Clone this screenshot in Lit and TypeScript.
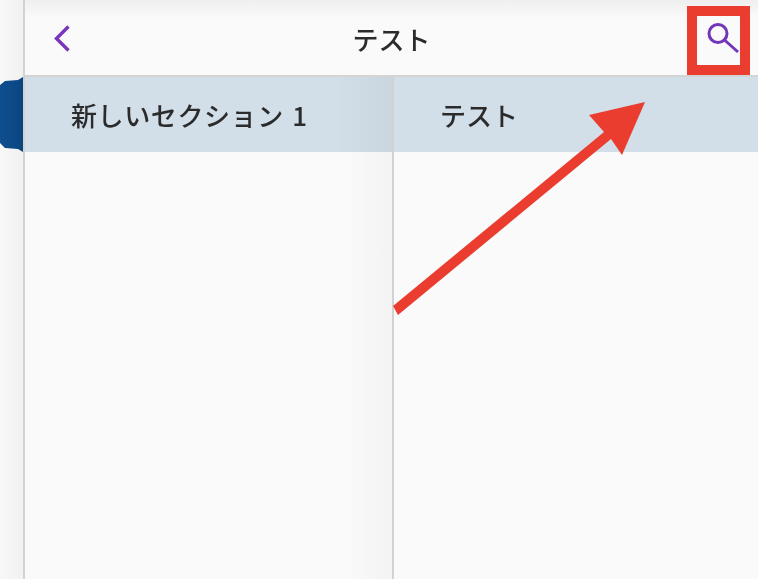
import { LitElement, html, css } from "lit";
import { customElement } from "lit/decorators.js";

@customElement("app-root")
export class AppRoot extends LitElement {
  static styles = css`
    :host {
      display: block;
      width: 758px;
      height: 579px;
      overflow: hidden;
      font-family: "Noto Sans CJK JP", "Liberation Sans", sans-serif;
      color: #2b2b2b;
    }

    .screen {
      position: relative;
      display: flex;
      height: 579px;
      background: #fafafa;
      filter: blur(0.7px);
    }

    .strip {
      width: 23px;
      flex: none;
      padding-top: 77px;
      background: linear-gradient(90deg, #f8f8f8, #f1f1f1);
      border-right: 2px solid #d2d2d2;
    }

    .tab {
      height: 75px;
      background: linear-gradient(90deg, #0f4f8f, #0a4580);
      clip-path: polygon(0 8px, 5px 4px, 18px 3px, 23px 0, 23px 100%, 18px 72px, 5px 71px, 0 66px);
    }

    .main {
      flex: 1;
      display: flex;
      flex-direction: column;
      min-width: 0;
    }

    .header {
      height: 77px;
      flex: none;
      display: flex;
      align-items: center;
      box-sizing: border-box;
      padding-left: 28px;
      background: linear-gradient(180deg, #efefef 0, #fafafa 18px);
      border-bottom: 2px solid #d4d4d4;
    }

    .back {
      width: 20px;
      height: 30px;
      flex: none;
    }

    .title {
      flex: 1;
      text-align: center;
      font-size: 26px;
      font-weight: 500;
      padding-left: 4px;
      padding-top: 2px;
    }

    .search {
      width: 36px;
      height: 36px;
      flex: none;
      margin-right: 16px;
    }

    .columns {
      flex: 1;
      display: flex;
    }

    .column {
      display: flex;
      flex-direction: column;
    }

    .column.left {
      width: 367px;
      flex: none;
      border-right: 2px solid #d2d2d2;
      background: linear-gradient(90deg, #fafafa 320px, #f3f3f3);
    }

    .column.right {
      flex: 1;
    }

    .row {
      height: 75px;
      display: flex;
      align-items: center;
      font-size: 26px;
      font-weight: 500;
      background: #d2dfe9;
      box-sizing: border-box;
    }

    .left .row {
      padding-left: 46px;
      letter-spacing: 0.6px;
      word-spacing: 2px;
      background: linear-gradient(90deg, #d2dfe9 310px, #c9d5df);
    }

    .right .row {
      padding-left: 46px;
    }

    .highlight {
      position: absolute;
      left: 687px;
      top: 6px;
      width: 43px;
      height: 49px;
      border: 10px solid #ea3d30;
    }

    .arrow {
      position: absolute;
      left: 0;
      top: 0;
      width: 758px;
      height: 579px;
      pointer-events: none;
    }
  `;

  render() {
    return html`
      <div class="screen">
        <div class="strip"><div class="tab"></div></div>
        <div class="main">
          <div class="header">
            <svg class="back" viewBox="0 0 20 30" fill="none" stroke="#7b35bd" stroke-width="3.4">
              <path d="M15.5 3.5 L3.5 15.5 L15.5 27.5" />
            </svg>
            <div class="title">テスト</div>
            <svg class="search" viewBox="0 0 36 36" fill="none" stroke="#7336b8" stroke-width="3">
              <circle cx="12" cy="13.5" r="9" />
              <path d="M18.5 20 L32 32" />
            </svg>
          </div>
          <div class="columns">
            <div class="column left">
              <div class="row">新しいセクション 1</div>
            </div>
            <div class="column right">
              <div class="row">テスト</div>
            </div>
          </div>
        </div>
        <div class="highlight"></div>
        <svg class="arrow" viewBox="0 0 758 579">
          <polygon fill="#ea3d30" points="645,102 589,115 604,132 393,306 398,315 611,139 622,155" />
        </svg>
      </div>
    `;
  }
}
